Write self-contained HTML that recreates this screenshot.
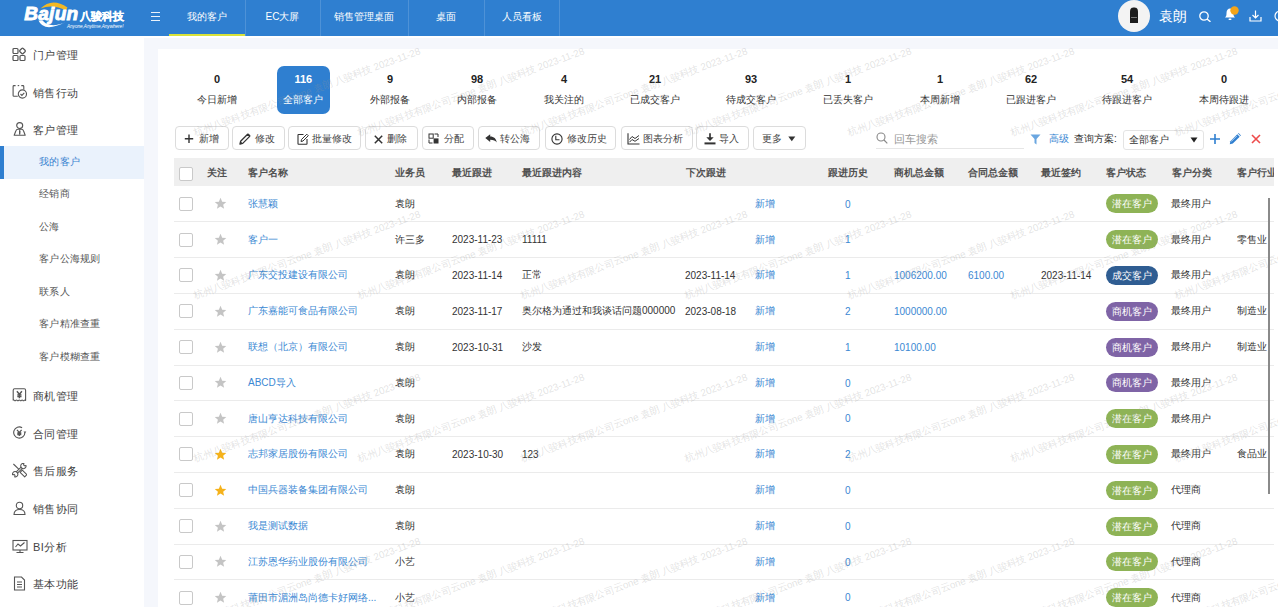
<!DOCTYPE html>
<html><head><meta charset="utf-8">
<style>
*{box-sizing:border-box;margin:0;padding:0}
html,body{width:1278px;height:607px;overflow:hidden;background:#f5f7fc;font-family:"Liberation Sans",sans-serif;color:#333;font-size:11px}
.abs{position:absolute}
#hdr{position:absolute;left:0;top:0;width:1278px;height:36px;background:#2f7fd0}
.tab{position:absolute;top:0;height:36px;line-height:33.5px;color:#fff;font-size:10px;text-align:center}
.sep{position:absolute;top:0;width:1px;height:36px;background:rgba(255,255,255,0.15)}
#side{position:absolute;left:0;top:36px;width:144px;height:571px;background:#fff}
.mi{position:absolute;left:33px;font-size:11px;letter-spacing:0.4px;color:#444;line-height:14px}
.mic{position:absolute;left:12px;width:15px;height:15px}
.si{position:absolute;left:39px;font-size:10px;letter-spacing:0.3px;color:#555;line-height:12px}
#card{position:absolute;left:158px;top:49px;width:1121px;height:559px;background:#fff}
.st{position:absolute;top:66px;height:48px;text-align:center;width:80px;margin-left:-40px}
.st b{position:absolute;left:0;right:0;top:6px;font-size:11px;line-height:14px;font-weight:bold;color:#222}
.st span{position:absolute;left:0;right:0;top:27px;font-size:10px;line-height:14px;color:#333}
.st.on{background:#2f7fd0;border-radius:7px;width:52.5px;margin-left:-27px}
.st.on b,.st.on span{color:#fff}
.btn{position:absolute;top:126px;height:24px;border:1px solid #dcdcdc;border-radius:4px;background:#fff;font-size:10px;color:#444;line-height:22px;white-space:nowrap}
.btn svg{position:absolute;top:5px}
.btn i{position:absolute;font-style:normal;top:0}
.th{position:absolute;overflow:hidden;top:158px;left:174px;width:1099.5px;height:28px;background:#efefef}
.hc{position:absolute;white-space:nowrap;top:8px;font-weight:bold;font-size:10px;line-height:14px;color:#505050}
.cb{position:absolute;left:5px;width:14px;height:14px;border:1px solid #c9c9c9;border-radius:2px;background:#fff}
.row{position:absolute;left:174px;width:1099.5px}
.ln{position:absolute;left:174px;width:1099.5px;height:1px;background:#ebebeb}
.star{position:absolute;left:39.5px;width:13px;height:13px}
.star svg{display:block}
.c{position:absolute;top:50%;margin-top:-7.2px;font-size:10px;line-height:14px;color:#333;white-space:nowrap}
.lk{color:#3b88d3}
.tag{position:absolute;left:932px;width:52px;height:19px;border-radius:9.5px;color:#fff;font-size:10px;text-align:center;line-height:19px}
.g{background:#8eb356}.p{background:#7f64a6}.d{background:#2f5d92}
.bt{position:absolute;top:132.5px;font-size:10px;line-height:12px;color:#444;white-space:nowrap}
#wm{position:absolute;left:157px;top:48px;width:1121px;height:559px;overflow:hidden;pointer-events:none}
.wmt{position:absolute;white-space:nowrap;font-size:10px;line-height:10px;color:rgba(150,150,150,0.28);letter-spacing:-0.16px;transform-origin:0 100%;transform:rotate(-20deg)}
.c.n{margin-top:-6.3px}

</style></head><body>
<div id="hdr">
  <svg class="abs" style="left:22px;top:2px" width="108" height="32" viewBox="0 0 108 32">
    <path d="M18.5 6.5 Q30 -5 45.5 5.5 L43.8 8.6 Q31 1.5 18.5 6.5 Z" fill="#f2b824"/>
    <text x="2.2" y="18" fill="#fff" font-family="Liberation Sans" font-weight="bold" font-style="italic" font-size="19" stroke="#fff" stroke-width="0.9" letter-spacing="0.3">Bajun</text>
    <path d="M16.5 18.5 Q22 31 44 20 Q28 27 20.5 18.5 Z" fill="#fff"/>
    <text x="57.5" y="17.5" fill="#fff" font-weight="bold" font-size="11" stroke="#fff" stroke-width="0.3">八骏科技</text>
    <text x="45" y="25.5" fill="#fff" font-size="4.6" font-style="italic" font-family="Liberation Sans">Anyone,Anytime,Anywhere!</text>
  </svg>
  <div class="abs" style="left:150.5px;top:11.6px;width:9.5px;height:1.2px;background:rgba(255,255,255,0.9);box-shadow:0 4px 0 rgba(255,255,255,0.9),0 8px 0 rgba(255,255,255,0.9)"></div>
  <div class="tab" style="left:169px;width:76px">我的客户</div>
  <div class="abs" style="left:169px;top:33.5px;width:76px;height:2px;background:#d8e23a"></div>
  <div class="sep" style="left:245px"></div>
  <div class="tab" style="left:245px;width:75px">EC大屏</div>
  <div class="sep" style="left:320px"></div>
  <div class="tab" style="left:320px;width:88px">销售管理桌面</div>
  <div class="sep" style="left:408px"></div>
  <div class="tab" style="left:408px;width:76px">桌面</div>
  <div class="sep" style="left:484px"></div>
  <div class="tab" style="left:484px;width:75px">人员看板</div>
  <div class="sep" style="left:559px"></div>
  <div class="abs" style="left:1117.8px;top:-0.3px;width:32.7px;height:32.7px;border-radius:50%;background:#f3f3f3"></div>
  <svg class="abs" style="left:1129px;top:7px" width="10" height="17" viewBox="0 0 10 17"><path d="M1 5 C1 1 3 0.5 5 0.5 C7 0.5 9 1 9 5 L9 16 L1 16 Z" fill="#1c1c1c"/><rect x="2" y="10" width="6" height="1" fill="#777"/></svg>
  <div class="abs" style="left:1159px;top:8px;color:#fff;font-size:14px;line-height:16px">袁朗</div>
  <svg class="abs" style="left:1199px;top:11px" width="13" height="11" viewBox="0 0 13 11"><circle cx="5" cy="5" r="4.2" fill="none" stroke="#fff" stroke-width="1.3"/><path d="M8 8 L11.5 10.8" stroke="#fff" stroke-width="1.4"/></svg>
  <svg class="abs" style="left:1224px;top:6px" width="16" height="15" viewBox="0 0 16 15"><path d="M1 11.5 C2.5 10 2.5 9 2.5 7 C2.5 4 4 2.5 6 2.5 C8 2.5 9.5 4 9.5 7 C9.5 9 9.5 10 11 11.5 Z" fill="#fff"/><rect x="4.5" y="12.5" width="3" height="1.6" rx="0.8" fill="#fff"/><circle cx="10.5" cy="4.5" r="4.2" fill="#f4a418"/></svg>
  <svg class="abs" style="left:1249px;top:10px" width="13" height="12" viewBox="0 0 13 12"><path d="M6.5 0.5 V8 M3.5 5 L6.5 8 L9.5 5 M1 7 V11 H12 V7" fill="none" stroke="#fff" stroke-width="1.2"/></svg>
  <svg class="abs" style="left:1274px;top:10px" width="6" height="12" viewBox="0 0 6 12"><circle cx="6" cy="6" r="5" fill="none" stroke="#fff" stroke-width="1.2"/></svg>
</div>
<div id="side">
  <svg class="mic" style="top:11px" viewBox="0 0 15 15"><g fill="none" stroke="#555" stroke-width="1.2"><rect x="1" y="1.5" width="5" height="5" rx="1"/><rect x="1" y="8.5" width="5" height="5" rx="1"/><rect x="8" y="8.5" width="5" height="5" rx="1"/><rect x="8.2" y="1.7" width="4.6" height="4.6" rx="1" transform="rotate(45 10.5 4)"/></g></svg>
  <div class="mi" style="top:12px">门户管理</div>
  <svg class="mic" style="top:49px" viewBox="0 0 15 15"><g fill="none" stroke="#555" stroke-width="1.1"><path d="M3.6 0.6 H2 Q1.1 0.6 1.1 1.5 V10.4 Q1.1 11.3 2 11.3 H5.8"/><path d="M11.8 4.6 V1.5 Q11.8 0.6 10.9 0.6 H9.3"/><path d="M5.7 0.6 H7.2"/><circle cx="10.4" cy="9" r="4.1"/><path d="M8.5 9 L9.9 10.4 L12.3 7.9"/></g></svg>
  <div class="mi" style="top:50px">销售行动</div>
  <svg class="mic" style="top:86px" viewBox="0 0 15 15"><g fill="none" stroke="#555" stroke-width="1.1" stroke-linejoin="round"><circle cx="7.7" cy="3.6" r="3"/><path d="M2.2 13.2 L3.8 9 Q4.4 7.3 6 7.3 H9.4 Q11 7.3 11.6 9 L13.2 13.2 Z"/><path d="M7.7 7.6 V12.6"/></g><path d="M7 9 L8.4 9 L8 12.5 H7.4 Z" fill="#555"/></svg>
  <div class="mi" style="top:87px">客户管理</div>
  <div class="abs" style="left:0;top:110px;width:144px;height:32.6px;background:#eaf2fc"></div>
  <div class="abs" style="left:0;top:110px;width:3.5px;height:32.6px;background:#2f7fd0"></div>
  <div class="si" style="top:120px;color:#3781cf">我的客户</div>
  <div class="si" style="top:152px">经销商</div>
  <div class="si" style="top:185px">公海</div>
  <div class="si" style="top:217px">客户公海规则</div>
  <div class="si" style="top:250px">联系人</div>
  <div class="si" style="top:282px">客户精准查重</div>
  <div class="si" style="top:315px">客户模糊查重</div>
  <svg class="mic" style="top:352px" viewBox="0 0 15 15"><g fill="none" stroke="#555" stroke-width="1.1" stroke-linejoin="round"><path d="M1.2 12.4 V2.2 Q1.2 0.8 2.6 0.8 H12.2 Q13.6 0.8 13.6 2.2 V12.4 Q12.9 11.6 12.2 12.4 Q11.5 13.2 10.8 12.4 Q10.1 11.6 9.4 12.4 Q8.7 13.2 8 12.4 Q7.3 11.6 6.6 12.4 Q5.9 13.2 5.2 12.4 Q4.5 11.6 3.8 12.4 Q3.1 13.2 2.4 12.4 Q1.8 11.6 1.2 12.4"/></g><g fill="none" stroke="#555" stroke-width="1.4"><path d="M4.9 3.2 L7.4 6.3 L9.9 3.2 M7.4 6.3 V10.2 M5.3 6.9 H9.5 M5.3 8.5 H9.5"/></g></svg>
  <div class="mi" style="top:353px">商机管理</div>
  <svg class="mic" style="top:390px" viewBox="0 0 15 15"><g fill="none" stroke="#555" stroke-width="1.1"><path d="M10.1 1.65 A5.6 5.6 0 1 0 12.9 6.5"/></g><path d="M11.5 5.4 L14.3 5.4 L12.9 7.6 Z" fill="#555"/><g fill="none" stroke="#555" stroke-width="1.3"><path d="M5 3.9 L7.3 6.6 L9.6 3.9 M7.3 6.6 V10 M5.3 7 H9.3 M5.3 8.5 H9.3"/></g></svg>
  <div class="mi" style="top:391px">合同管理</div>
  <svg class="mic" style="top:427px" viewBox="0 0 15 15"><g fill="none" stroke="#555" stroke-width="1.05" stroke-linejoin="round"><path d="M1.4 1 L7 6.4"/><path d="M10.3 7.1 L14.9 11.7 L12.7 13.9 L8.1 9.3 Z"/><path d="M14.06 2.53 A2.7 2.7 0 1 1 11.87 0.34 L11.6 1.9 L12.5 2.8 Z"/><path d="M0.54 11.67 A2.7 2.7 0 1 1 2.73 13.86 L3 12.3 L2.1 11.4 Z"/><path d="M10.64 5.04 L5.24 10.44 M9.36 3.76 L3.96 9.16"/></g></svg>
  <div class="mi" style="top:428px">售后服务</div>
  <svg class="mic" style="top:465px" viewBox="0 0 15 15"><g fill="none" stroke="#555" stroke-width="1.1"><circle cx="7.5" cy="4.5" r="3.2"/><path d="M2 13.5 C2 10 4.5 8.5 7.5 8.5 C10.5 8.5 13 10 13 13.5 Z"/></g></svg>
  <div class="mi" style="top:466px">销售协同</div>
  <svg class="mic" style="top:503px;width:16px" viewBox="0 0 16 15"><g fill="none" stroke="#555" stroke-width="1.1"><rect x="1" y="1.5" width="14" height="9.5"/><path d="M3.5 8 L6 5 L8.5 7 L12.5 3.5 M8 11 V13.5 M4.5 13.5 H11.5"/></g></svg>
  <div class="mi" style="top:504px">BI分析</div>
  <svg class="mic" style="top:540px" viewBox="0 0 15 15"><g fill="none" stroke="#555" stroke-width="1.1"><path d="M2.5 1 H9.5 L12.5 4 V14 H2.5 Z"/><path d="M5 6 H10 M5 8.5 H10 M5 11 H10"/></g></svg>
  <div class="mi" style="top:541px">基本功能</div>
</div>
<div class="abs" style="left:144px;top:36px;width:1134px;height:2px;background:#fff"></div>
<div id="card"></div>
<div class="st" style="left:217px"><b>0</b><span>今日新增</span></div>
<div class="st on" style="left:304px"><b>116</b><span>全部客户</span></div>
<div class="st" style="left:390px"><b>9</b><span>外部报备</span></div>
<div class="st" style="left:477px"><b>98</b><span>内部报备</span></div>
<div class="st" style="left:564px"><b>4</b><span>我关注的</span></div>
<div class="st" style="left:655px"><b>21</b><span>已成交客户</span></div>
<div class="st" style="left:751px"><b>93</b><span>待成交客户</span></div>
<div class="st" style="left:848px"><b>1</b><span>已丢失客户</span></div>
<div class="st" style="left:940px"><b>1</b><span>本周新增</span></div>
<div class="st" style="left:1031px"><b>62</b><span>已跟进客户</span></div>
<div class="st" style="left:1127px"><b>54</b><span>待跟进客户</span></div>
<div class="st" style="left:1224px"><b>0</b><span>本周待跟进</span></div>

<div class="btn" style="left:175px;width:53.5px"></div>
<div class="btn" style="left:232px;width:53px"></div>
<div class="btn" style="left:288px;width:72.5px"></div>
<div class="btn" style="left:364.5px;width:53px"></div>
<div class="btn" style="left:421.5px;width:52.5px"></div>
<div class="btn" style="left:477.5px;width:62.5px"></div>
<div class="btn" style="left:544.5px;width:71.5px"></div>
<div class="btn" style="left:620.5px;width:72px"></div>
<div class="btn" style="left:696px;width:52.5px"></div>
<div class="btn" style="left:752.5px;width:53px"></div>
<div class="bt" style="left:198.5px">新增</div>
<div class="bt" style="left:255px">修改</div>
<div class="bt" style="left:311.5px">批量修改</div>
<div class="bt" style="left:387.3px">删除</div>
<div class="bt" style="left:444.2px">分配</div>
<div class="bt" style="left:500.4px">转公海</div>
<div class="bt" style="left:567px">修改历史</div>
<div class="bt" style="left:643.1px">图表分析</div>
<div class="bt" style="left:719px">导入</div>
<div class="bt" style="left:762.3px">更多</div>
<svg class="abs" style="left:184px;top:134px" width="10" height="10" viewBox="0 0 10 10"><path d="M5 0.5 V9 M0.8 4.8 H9.2" stroke="#333" stroke-width="1.4"/></svg>
<svg class="abs" style="left:239px;top:132.5px" width="12" height="12" viewBox="0 0 12 12"><path d="M1 11 L1.6 8.3 L8.6 1.3 L10.7 3.4 L3.7 10.4 Z" fill="none" stroke="#333" stroke-width="1.3" stroke-linejoin="round"/><path d="M1 11 L1.6 8.3 L3.7 10.4 Z" fill="#333"/><path d="M8.6 1.3 L10.7 3.4 L11.5 2.6 L9.4 0.5 Z" fill="#333"/></svg>
<svg class="abs" style="left:296.5px;top:132.5px" width="12" height="12" viewBox="0 0 12 12"><path d="M6.5 1.5 H1.5 Q1 1.5 1 2 V10.8 Q1 11.3 1.5 11.3 H9.5 Q10 11.3 10 10.8 V6" fill="none" stroke="#333" stroke-width="1.1"/><path d="M4 8.5 L4.5 6.5 L9.8 1.2 L11.3 2.7 L6 8 Z" fill="none" stroke="#333" stroke-width="1"/></svg>
<svg class="abs" style="left:373.5px;top:134.5px" width="9" height="9" viewBox="0 0 9 9"><path d="M0.8 0.8 L8.2 8.2 M8.2 0.8 L0.8 8.2" stroke="#333" stroke-width="1.5"/></svg>
<svg class="abs" style="left:428px;top:133px" width="11" height="11" viewBox="0 0 11 11"><rect x="1" y="1" width="4.2" height="4.2" fill="none" stroke="#333" stroke-width="1"/><rect x="5.6" y="5.4" width="4.9" height="5.1" fill="#333"/><path d="M6.5 1 H10 V4 M1 6.5 V10 H4.5" fill="none" stroke="#333" stroke-width="1"/></svg>
<svg class="abs" style="left:485px;top:134px" width="12" height="9" viewBox="0 0 12 9"><path d="M0.3 4 L5.2 0.2 V2.5 C9 2.6 11.2 4.5 11.8 8.6 C10.5 6.6 8.5 5.8 5.2 5.8 V8 Z" fill="#333"/></svg>
<svg class="abs" style="left:551px;top:132.5px" width="12" height="12" viewBox="0 0 12 12"><circle cx="6" cy="6" r="5.1" fill="none" stroke="#333" stroke-width="1.1"/><path d="M4.8 2.8 V6.8 H8.5" fill="none" stroke="#333" stroke-width="1.1"/></svg>
<svg class="abs" style="left:626.5px;top:132.5px" width="13" height="12" viewBox="0 0 13 12"><path d="M1 0.3 V11 H12.5" fill="none" stroke="#333" stroke-width="1.1"/><path d="M2.5 6.5 L5 3.5 L8 5.5 L12 2.5 M2.5 9.2 L5 6.5 L8 8.3 L12 5.5" fill="none" stroke="#333" stroke-width="1"/></svg>
<svg class="abs" style="left:703.5px;top:132.5px" width="12" height="12" viewBox="0 0 12 12"><path d="M6 0.3 V6" stroke="#333" stroke-width="1.7"/><path d="M2.3 4.3 L6 8 L9.7 4.3 Z" fill="#333"/><rect x="0.5" y="9.4" width="11" height="2" fill="#333"/></svg>
<svg class="abs" style="left:788px;top:135.5px" width="8" height="6" viewBox="0 0 8 6"><path d="M0.3 0.5 H7.3 L3.8 5.3 Z" fill="#333"/></svg>

<svg class="abs" style="left:876px;top:132px" width="12" height="12" viewBox="0 0 12 12"><circle cx="5" cy="5" r="4" fill="none" stroke="#888" stroke-width="1.1"/><path d="M8 8 L11.3 11.3" stroke="#888" stroke-width="1.2"/></svg>
<div class="abs" style="left:893.5px;top:132px;font-size:11px;line-height:14px;color:#999">回车搜索</div>
<div class="abs" style="left:876px;top:148px;width:148px;height:1px;background:#e6e6e6"></div>
<svg class="abs" style="left:1030px;top:134px" width="11" height="11" viewBox="0 0 11 11"><path d="M0.5 0.5 H10.5 L6.5 5 V10.5 L4.5 9 V5 Z" fill="#6aa6e0"/></svg>
<div class="abs" style="left:1049px;top:132px;font-size:10px;line-height:14px;color:#3b88d3">高级</div>
<div class="abs" style="left:1074px;top:132px;font-size:10px;line-height:14px;color:#333">查询方案:</div>
<div class="abs" style="left:1122.5px;top:130.3px;width:81px;height:20px;border:1px solid #e4e4e4;border-radius:3px;background:#fff"></div>
<div class="abs" style="left:1129px;top:133px;font-size:10px;line-height:14px;color:#333">全部客户</div>
<svg class="abs" style="left:1189.5px;top:136.5px" width="8" height="6" viewBox="0 0 8 6"><path d="M0.5 0.5 H7.5 L4 5.5 Z" fill="#222"/></svg>
<svg class="abs" style="left:1209.5px;top:134px" width="10" height="10" viewBox="0 0 10 10"><path d="M5 0 V10 M0 5 H10" stroke="#2f7fd0" stroke-width="1.6"/></svg>
<svg class="abs" style="left:1229px;top:132.5px" width="12" height="12" viewBox="0 0 12 12"><path d="M0.8 11.2 L1.4 8.2 L8.3 1.3 L10.7 3.7 L3.8 10.6 Z" fill="#2f7fd0"/><path d="M9 0.6 L9.6 0 L12 2.4 L11.4 3 Z" fill="#2f7fd0"/><path d="M2.2 8.6 L7.9 2.9" stroke="#fff" stroke-width="0.6"/></svg>
<svg class="abs" style="left:1251px;top:134px" width="10" height="10" viewBox="0 0 10 10"><path d="M1 1 L9 9 M9 1 L1 9" stroke="#ee4b4b" stroke-width="1.6"/></svg>

<div class="th">
  <div class="cb" style="top:8.5px"></div>
  <div class="hc" style="left:33px">关注</div>
  <div class="hc" style="left:74px">客户名称</div>
  <div class="hc" style="left:221px">业务员</div>
  <div class="hc" style="left:278px">最近跟进</div>
  <div class="hc" style="left:348px">最近跟进内容</div>
  <div class="hc" style="left:511.5px">下次跟进</div>
  <div class="hc" style="left:653.5px">跟进历史</div>
  <div class="hc" style="left:720px">商机总金额</div>
  <div class="hc" style="left:794px">合同总金额</div>
  <div class="hc" style="left:866.5px">最近签约</div>
  <div class="hc" style="left:932px">客户状态</div>
  <div class="hc" style="left:997.5px">客户分类</div>
  <div class="hc" style="left:1063px">客户行业</div>
</div>
<div class="row" style="top:186.00px;height:35.8px">
<div class="cb" style="top:10.90px"></div>
<div class="star" style="top:11.40px"><svg width="13" height="13" viewBox="0 0 24 24"><path fill="#c4c4c4" d="M12 1.5l3.1 7.1 7.6.6-5.8 5 1.8 7.5L12 17.7l-6.6 4 1.8-7.5-5.8-5 7.6-.6z"/></svg></div>
<div class="c lk" style="left:74px">张慧颖</div>
<div class="c " style="left:221px">袁朗</div>
<div class="c lk" style="left:581px">新增</div>
<div class="c lk n" style="left:671px">0</div>
<div class="tag g" style="top:8.40px">潜在客户</div>
<div class="c " style="left:997px">最终用户</div>
</div>
<div class="ln" style="top:221.30px"></div>
<div class="row" style="top:221.80px;height:35.8px">
<div class="cb" style="top:10.90px"></div>
<div class="star" style="top:11.40px"><svg width="13" height="13" viewBox="0 0 24 24"><path fill="#c4c4c4" d="M12 1.5l3.1 7.1 7.6.6-5.8 5 1.8 7.5L12 17.7l-6.6 4 1.8-7.5-5.8-5 7.6-.6z"/></svg></div>
<div class="c lk" style="left:74px">客户一</div>
<div class="c " style="left:221px">许三多</div>
<div class="c  n" style="left:278px">2023-11-23</div>
<div class="c  n" style="left:348px">11111</div>
<div class="c lk" style="left:581px">新增</div>
<div class="c lk n" style="left:671px">1</div>
<div class="tag g" style="top:8.40px">潜在客户</div>
<div class="c " style="left:997px">最终用户</div>
<div class="c " style="left:1063px">零售业</div>
</div>
<div class="ln" style="top:257.10px"></div>
<div class="row" style="top:257.60px;height:35.8px">
<div class="cb" style="top:10.90px"></div>
<div class="star" style="top:11.40px"><svg width="13" height="13" viewBox="0 0 24 24"><path fill="#c4c4c4" d="M12 1.5l3.1 7.1 7.6.6-5.8 5 1.8 7.5L12 17.7l-6.6 4 1.8-7.5-5.8-5 7.6-.6z"/></svg></div>
<div class="c lk" style="left:74px">广东交投建设有限公司</div>
<div class="c " style="left:221px">袁朗</div>
<div class="c  n" style="left:278px">2023-11-14</div>
<div class="c " style="left:348px">正常</div>
<div class="c  n" style="left:511px">2023-11-14</div>
<div class="c lk" style="left:581px">新增</div>
<div class="c lk n" style="left:671px">1</div>
<div class="c lk n" style="left:720px">1006200.00</div>
<div class="c lk n" style="left:794px">6100.00</div>
<div class="c  n" style="left:867px">2023-11-14</div>
<div class="tag d" style="top:8.40px">成交客户</div>
<div class="c " style="left:997px">最终用户</div>
</div>
<div class="ln" style="top:292.90px"></div>
<div class="row" style="top:293.40px;height:35.8px">
<div class="cb" style="top:10.90px"></div>
<div class="star" style="top:11.40px"><svg width="13" height="13" viewBox="0 0 24 24"><path fill="#c4c4c4" d="M12 1.5l3.1 7.1 7.6.6-5.8 5 1.8 7.5L12 17.7l-6.6 4 1.8-7.5-5.8-5 7.6-.6z"/></svg></div>
<div class="c lk" style="left:74px">广东嘉能可食品有限公司</div>
<div class="c " style="left:221px">袁朗</div>
<div class="c  n" style="left:278px">2023-11-17</div>
<div class="c " style="left:348px">奥尔格为通过和我谈话问题000000</div>
<div class="c  n" style="left:511px">2023-08-18</div>
<div class="c lk" style="left:581px">新增</div>
<div class="c lk n" style="left:671px">2</div>
<div class="c lk n" style="left:720px">1000000.00</div>
<div class="tag p" style="top:8.40px">商机客户</div>
<div class="c " style="left:997px">最终用户</div>
<div class="c " style="left:1063px">制造业</div>
</div>
<div class="ln" style="top:328.70px"></div>
<div class="row" style="top:329.20px;height:35.8px">
<div class="cb" style="top:10.90px"></div>
<div class="star" style="top:11.40px"><svg width="13" height="13" viewBox="0 0 24 24"><path fill="#c4c4c4" d="M12 1.5l3.1 7.1 7.6.6-5.8 5 1.8 7.5L12 17.7l-6.6 4 1.8-7.5-5.8-5 7.6-.6z"/></svg></div>
<div class="c lk" style="left:74px">联想（北京）有限公司</div>
<div class="c " style="left:221px">袁朗</div>
<div class="c  n" style="left:278px">2023-10-31</div>
<div class="c " style="left:348px">沙发</div>
<div class="c lk" style="left:581px">新增</div>
<div class="c lk n" style="left:671px">1</div>
<div class="c lk n" style="left:720px">10100.00</div>
<div class="tag p" style="top:8.40px">商机客户</div>
<div class="c " style="left:997px">最终用户</div>
<div class="c " style="left:1063px">制造业</div>
</div>
<div class="ln" style="top:364.50px"></div>
<div class="row" style="top:365.00px;height:35.8px">
<div class="cb" style="top:10.90px"></div>
<div class="star" style="top:11.40px"><svg width="13" height="13" viewBox="0 0 24 24"><path fill="#c4c4c4" d="M12 1.5l3.1 7.1 7.6.6-5.8 5 1.8 7.5L12 17.7l-6.6 4 1.8-7.5-5.8-5 7.6-.6z"/></svg></div>
<div class="c lk" style="left:74px">ABCD导入</div>
<div class="c " style="left:221px">袁朗</div>
<div class="c lk" style="left:581px">新增</div>
<div class="c lk n" style="left:671px">0</div>
<div class="tag p" style="top:8.40px">商机客户</div>
<div class="c " style="left:997px">最终用户</div>
</div>
<div class="ln" style="top:400.30px"></div>
<div class="row" style="top:400.80px;height:35.8px">
<div class="cb" style="top:10.90px"></div>
<div class="star" style="top:11.40px"><svg width="13" height="13" viewBox="0 0 24 24"><path fill="#c4c4c4" d="M12 1.5l3.1 7.1 7.6.6-5.8 5 1.8 7.5L12 17.7l-6.6 4 1.8-7.5-5.8-5 7.6-.6z"/></svg></div>
<div class="c lk" style="left:74px">唐山亨达科技有限公司</div>
<div class="c " style="left:221px">袁朗</div>
<div class="c lk" style="left:581px">新增</div>
<div class="c lk n" style="left:671px">0</div>
<div class="tag g" style="top:8.40px">潜在客户</div>
<div class="c " style="left:997px">最终用户</div>
</div>
<div class="ln" style="top:436.10px"></div>
<div class="row" style="top:436.60px;height:35.8px">
<div class="cb" style="top:10.90px"></div>
<div class="star" style="top:11.40px"><svg width="13" height="13" viewBox="0 0 24 24"><path fill="#f5b21b" d="M12 1.5l3.1 7.1 7.6.6-5.8 5 1.8 7.5L12 17.7l-6.6 4 1.8-7.5-5.8-5 7.6-.6z"/></svg></div>
<div class="c lk" style="left:74px">志邦家居股份有限公司</div>
<div class="c " style="left:221px">袁朗</div>
<div class="c  n" style="left:278px">2023-10-30</div>
<div class="c  n" style="left:348px">123</div>
<div class="c lk" style="left:581px">新增</div>
<div class="c lk n" style="left:671px">2</div>
<div class="tag g" style="top:8.40px">潜在客户</div>
<div class="c " style="left:997px">最终用户</div>
<div class="c " style="left:1063px">食品业</div>
</div>
<div class="ln" style="top:471.90px"></div>
<div class="row" style="top:472.40px;height:35.8px">
<div class="cb" style="top:10.90px"></div>
<div class="star" style="top:11.40px"><svg width="13" height="13" viewBox="0 0 24 24"><path fill="#f5b21b" d="M12 1.5l3.1 7.1 7.6.6-5.8 5 1.8 7.5L12 17.7l-6.6 4 1.8-7.5-5.8-5 7.6-.6z"/></svg></div>
<div class="c lk" style="left:74px">中国兵器装备集团有限公司</div>
<div class="c " style="left:221px">袁朗</div>
<div class="c lk" style="left:581px">新增</div>
<div class="c lk n" style="left:671px">0</div>
<div class="tag g" style="top:8.40px">潜在客户</div>
<div class="c " style="left:997px">代理商</div>
</div>
<div class="ln" style="top:507.70px"></div>
<div class="row" style="top:508.20px;height:35.8px">
<div class="cb" style="top:10.90px"></div>
<div class="star" style="top:11.40px"><svg width="13" height="13" viewBox="0 0 24 24"><path fill="#c4c4c4" d="M12 1.5l3.1 7.1 7.6.6-5.8 5 1.8 7.5L12 17.7l-6.6 4 1.8-7.5-5.8-5 7.6-.6z"/></svg></div>
<div class="c lk" style="left:74px">我是测试数据</div>
<div class="c " style="left:221px">袁朗</div>
<div class="c lk" style="left:581px">新增</div>
<div class="c lk n" style="left:671px">0</div>
<div class="tag g" style="top:8.40px">潜在客户</div>
<div class="c " style="left:997px">代理商</div>
</div>
<div class="ln" style="top:543.50px"></div>
<div class="row" style="top:544.00px;height:35.8px">
<div class="cb" style="top:10.90px"></div>
<div class="star" style="top:11.40px"><svg width="13" height="13" viewBox="0 0 24 24"><path fill="#c4c4c4" d="M12 1.5l3.1 7.1 7.6.6-5.8 5 1.8 7.5L12 17.7l-6.6 4 1.8-7.5-5.8-5 7.6-.6z"/></svg></div>
<div class="c lk" style="left:74px">江苏恩华药业股份有限公司</div>
<div class="c " style="left:221px">小艺</div>
<div class="c lk" style="left:581px">新增</div>
<div class="c lk n" style="left:671px">0</div>
<div class="tag g" style="top:8.40px">潜在客户</div>
<div class="c " style="left:997px">代理商</div>
</div>
<div class="ln" style="top:579.30px"></div>
<div class="row" style="top:579.80px;height:35.8px">
<div class="cb" style="top:10.90px"></div>
<div class="star" style="top:11.40px"><svg width="13" height="13" viewBox="0 0 24 24"><path fill="#c4c4c4" d="M12 1.5l3.1 7.1 7.6.6-5.8 5 1.8 7.5L12 17.7l-6.6 4 1.8-7.5-5.8-5 7.6-.6z"/></svg></div>
<div class="c lk" style="left:74px">莆田市湄洲岛尚德卡好网络...</div>
<div class="c " style="left:221px">小艺</div>
<div class="c lk" style="left:581px">新增</div>
<div class="c lk n" style="left:671px">0</div>
<div class="tag g" style="top:8.40px">潜在客户</div>
<div class="c " style="left:997px">代理商</div>
</div>
<div class="ln" style="top:615.10px"></div>
<div id="wm"><div class="wmt" style="left:39.3px;top:79.6px">杭州八骏科技有限公司云one 袁朗 八骏科技 2023-11-28</div><div class="wmt" style="left:202.7px;top:79.6px">杭州八骏科技有限公司云one 袁朗 八骏科技 2023-11-28</div><div class="wmt" style="left:366.1px;top:79.6px">杭州八骏科技有限公司云one 袁朗 八骏科技 2023-11-28</div><div class="wmt" style="left:529.5px;top:79.6px">杭州八骏科技有限公司云one 袁朗 八骏科技 2023-11-28</div><div class="wmt" style="left:692.9px;top:79.6px">杭州八骏科技有限公司云one 袁朗 八骏科技 2023-11-28</div><div class="wmt" style="left:856.3px;top:79.6px">杭州八骏科技有限公司云one 袁朗 八骏科技 2023-11-28</div><div class="wmt" style="left:1019.7px;top:79.6px">杭州八骏科技有限公司云one 袁朗 八骏科技 2023-11-28</div><div class="wmt" style="left:39.3px;top:243.0px">杭州八骏科技有限公司云one 袁朗 八骏科技 2023-11-28</div><div class="wmt" style="left:202.7px;top:243.0px">杭州八骏科技有限公司云one 袁朗 八骏科技 2023-11-28</div><div class="wmt" style="left:366.1px;top:243.0px">杭州八骏科技有限公司云one 袁朗 八骏科技 2023-11-28</div><div class="wmt" style="left:529.5px;top:243.0px">杭州八骏科技有限公司云one 袁朗 八骏科技 2023-11-28</div><div class="wmt" style="left:692.9px;top:243.0px">杭州八骏科技有限公司云one 袁朗 八骏科技 2023-11-28</div><div class="wmt" style="left:856.3px;top:243.0px">杭州八骏科技有限公司云one 袁朗 八骏科技 2023-11-28</div><div class="wmt" style="left:1019.7px;top:243.0px">杭州八骏科技有限公司云one 袁朗 八骏科技 2023-11-28</div><div class="wmt" style="left:39.3px;top:406.4px">杭州八骏科技有限公司云one 袁朗 八骏科技 2023-11-28</div><div class="wmt" style="left:202.7px;top:406.4px">杭州八骏科技有限公司云one 袁朗 八骏科技 2023-11-28</div><div class="wmt" style="left:366.1px;top:406.4px">杭州八骏科技有限公司云one 袁朗 八骏科技 2023-11-28</div><div class="wmt" style="left:529.5px;top:406.4px">杭州八骏科技有限公司云one 袁朗 八骏科技 2023-11-28</div><div class="wmt" style="left:692.9px;top:406.4px">杭州八骏科技有限公司云one 袁朗 八骏科技 2023-11-28</div><div class="wmt" style="left:856.3px;top:406.4px">杭州八骏科技有限公司云one 袁朗 八骏科技 2023-11-28</div><div class="wmt" style="left:1019.7px;top:406.4px">杭州八骏科技有限公司云one 袁朗 八骏科技 2023-11-28</div><div class="wmt" style="left:39.3px;top:569.8px">杭州八骏科技有限公司云one 袁朗 八骏科技 2023-11-28</div><div class="wmt" style="left:202.7px;top:569.8px">杭州八骏科技有限公司云one 袁朗 八骏科技 2023-11-28</div><div class="wmt" style="left:366.1px;top:569.8px">杭州八骏科技有限公司云one 袁朗 八骏科技 2023-11-28</div><div class="wmt" style="left:529.5px;top:569.8px">杭州八骏科技有限公司云one 袁朗 八骏科技 2023-11-28</div><div class="wmt" style="left:692.9px;top:569.8px">杭州八骏科技有限公司云one 袁朗 八骏科技 2023-11-28</div><div class="wmt" style="left:856.3px;top:569.8px">杭州八骏科技有限公司云one 袁朗 八骏科技 2023-11-28</div><div class="wmt" style="left:1019.7px;top:569.8px">杭州八骏科技有限公司云one 袁朗 八骏科技 2023-11-28</div></div><!--wm-->
<div class="abs" style="left:1268px;top:197.5px;width:2px;height:296px;background:#8a8a8a"></div>

</body></html>
